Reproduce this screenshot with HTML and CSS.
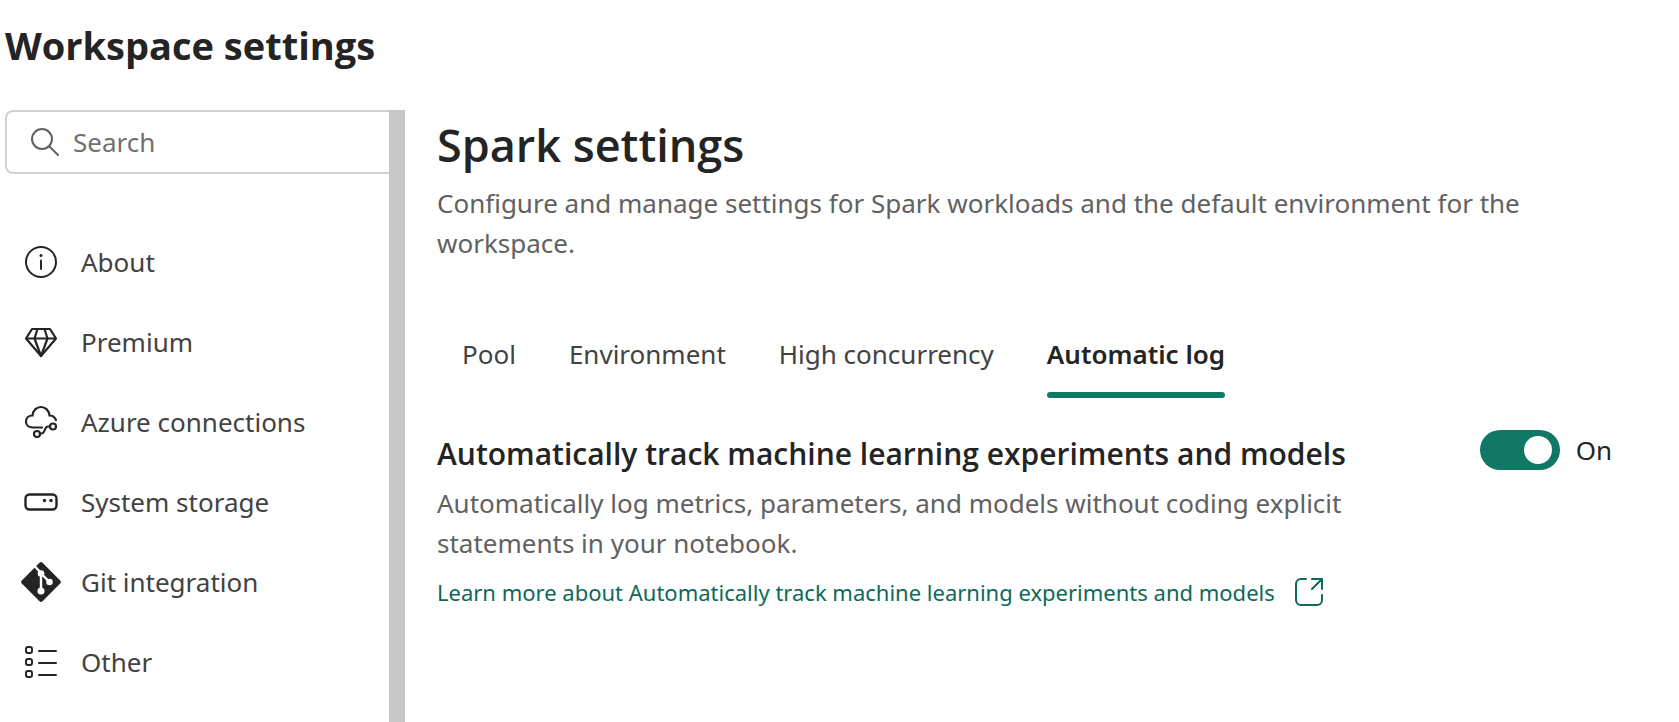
FILE: index.html
```html
<!DOCTYPE html>
<html lang="en">
<head>
<meta charset="utf-8">
<title>Workspace settings</title>
<meta name="viewport" content="width=device-width, initial-scale=1">
<link rel="stylesheet" href="styles.css">
</head>
<body>
<div class="page">
  <header class="page-header">
    <h1 class="page-title">Workspace settings</h1>
  </header>
  <div class="layout">
    <aside class="sidebar">
      <div class="sidebar-content">
        <label class="search">
          <svg class="search-icon" viewBox="0 0 28 28" fill="none" stroke="#616161" stroke-width="2" stroke-linecap="round" aria-hidden="true"><circle cx="11" cy="11" r="10"/><path d="M18.500 18.500 27 27"/></svg>
          <input class="search-input" type="search" placeholder="Search" aria-label="Search">
        </label>
        <nav class="nav" aria-label="Workspace settings">
          <a class="nav-item" href="#about">
            <svg class="nav-icon" viewBox="0 0 40 40" aria-hidden="true"><circle cx="20" cy="20" r="15" fill="none" stroke="#242424" stroke-width="2"/><circle cx="20" cy="13.500" r="1.500" fill="#242424"/><path d="M20 18.500v8.500" stroke="#242424" stroke-width="2" stroke-linecap="round"/></svg>
            About</a>
          <a class="nav-item" href="#premium">
            <svg class="nav-icon" viewBox="0 0 40 40" fill="none" stroke="#242424" stroke-width="2.200" stroke-linejoin="round" aria-hidden="true"><path d="M11 7h18l6 9.500L20 34 5 16.500z"/><path d="M5 16.500h30M16.500 7l-3 9.500L20 34l6.500-17.500-3-9.500"/></svg>
            Premium</a>
          <a class="nav-item" href="#azure">
            <svg class="nav-icon" viewBox="0 0 40 40" fill="none" stroke="#242424" stroke-width="2.200" stroke-linecap="round" aria-hidden="true"><path d="M21 25.500H11.500C7.500 25.500 5 23 5 19.500s2.500-6 6.500-6C12 8.500 15.500 5 20 5s8 3.500 8.500 8.500c3.500 0 5.500 2 6.500 4.500"/><circle cx="32" cy="24.500" r="3"/><circle cx="16" cy="32" r="3"/><path d="M19 31.500h1.500c4 0 2.500-7 6.500-7H29"/></svg>
            Azure connections</a>
          <a class="nav-item" href="#storage">
            <svg class="nav-icon" viewBox="0 0 40 40" aria-hidden="true"><rect x="4.500" y="12.500" width="31" height="15" rx="4" fill="none" stroke="#242424" stroke-width="2.400"/><circle cx="23.500" cy="18.500" r="1.700" fill="#242424"/><circle cx="30" cy="18.500" r="1.700" fill="#242424"/></svg>
            System storage</a>
          <a class="nav-item" href="#git">
            <svg class="nav-icon" viewBox="0 0 40 40" aria-hidden="true"><path d="M18.500.8a2.200 2.200 0 0 1 3 0L39.200 18.500a2.200 2.200 0 0 1 0 3L21.500 39.200a2.200 2.200 0 0 1-3 0L.8 21.500a2.200 2.200 0 0 1 0-3z" fill="#242424"/><path d="M14 4.500l6 6.500M20.500 12l8 8M20 12v16.500" stroke="#fff" stroke-width="2.400"/><g fill="#fff"><circle cx="20" cy="11.500" r="3.300"/><circle cx="28.500" cy="20" r="3.300"/><circle cx="20" cy="29" r="3.500"/></g></svg>
            Git integration</a>
          <a class="nav-item" href="#other">
            <svg class="nav-icon" viewBox="0 0 40 40" fill="none" stroke="#242424" stroke-width="2" stroke-linecap="round" aria-hidden="true"><rect x="5" y="5" width="6" height="6" rx="2"/><rect x="5" y="17" width="6" height="6" rx="2"/><rect x="5" y="29" width="6" height="6" rx="2"/><path d="M18 9h17M18 21h17M18 33h17"/></svg>
            Other</a>
        </nav>
      </div>
      <div class="sidebar-scrollbar"></div>
    </aside>
    <main class="main">
      <h2 class="main-title">Spark settings</h2>
      <p class="description">Configure and manage settings for Spark workloads and the default environment for the workspace.</p>
      <div class="tabs" role="tablist">
        <button class="tab" type="button" role="tab" aria-selected="false">Pool</button>
        <button class="tab" type="button" role="tab" aria-selected="false">Environment</button>
        <button class="tab" type="button" role="tab" aria-selected="false">High concurrency</button>
        <button class="tab tab-selected" type="button" role="tab" aria-selected="true">Automatic log</button>
      </div>
      <section class="setting">
        <div class="setting-text">
          <h3 class="setting-title">Automatically track machine learning experiments and models</h3>
          <p class="description">Automatically log metrics, parameters, and models without coding explicit statements in your notebook.</p>
          <a class="learn-more" href="#learn">Learn more about Automatically track machine learning experiments and models
            <svg class="link-icon" viewBox="0 0 28 28" fill="none" stroke="#0c695a" stroke-width="2" stroke-linecap="round" stroke-linejoin="round" aria-hidden="true"><path d="M11 1H6a5 5 0 0 0-5 5v16a5 5 0 0 0 5 5h16a5 5 0 0 0 5-5v-5M17 1h10v10M27 1 17 11"/></svg></a>
        </div>
        <label class="switch">
          <input class="switch-input" type="checkbox" role="switch" checked>
          On
        </label>
      </section>
    </main>
  </div>
</div>
</body>
</html>
```
FILE: styles.css
```css
* {
  box-sizing: border-box;
}

body {
  margin: 0;
  background: #fff;
  color: #242424;
  font-family: "Noto Sans", "Open Sans", sans-serif;
  font-size: 26px;
  line-height: 40px;
}

h1, h2, h3, p {
  margin: 0;
}

.page {
  display: flex;
  flex-direction: column;
  min-height: 100vh;
}

.page-header {
  padding: 17px 5px 37px;
}

.page-title {
  font-family: "Open Sans", sans-serif;
  font-size: 38px;
  line-height: 56px;
  font-weight: 700;
}

.layout {
  display: flex;
  flex: 1;
}

.sidebar {
  display: flex;
  flex: none;
  width: 405px;
}

.sidebar-content {
  flex: 1;
  min-width: 0;
  padding-left: 5px;
}

.sidebar-scrollbar {
  flex: none;
  width: 16px;
  background: #c7c7c7;
}

.search {
  display: flex;
  align-items: center;
  gap: 14px;
  height: 64px;
  padding-left: 24px;
  border: 2px solid #d1d1d1;
  border-right: 0;
  border-radius: 8px 0 0 8px;
}

.search-icon {
  flex: none;
  width: 28px;
  height: 28px;
}

.search-input {
  flex: 1;
  min-width: 0;
  padding: 0;
  border: 0;
  outline: 0;
  background: none;
  color: #242424;
  font: inherit;
}

.search-input::placeholder {
  color: #707070;
  opacity: 1;
}

.nav {
  display: flex;
  flex-direction: column;
  padding: 48px 0 0 16px;
}

.nav-item {
  display: flex;
  align-items: center;
  gap: 20px;
  height: 80px;
  color: #424242;
  text-decoration: none;
}

.nav-icon {
  flex: none;
  width: 40px;
  height: 40px;
}

.main {
  flex: 1;
  min-width: 0;
  padding: 3px 67px 32px 32px;
}

.main-title {
  font-family: "Open Sans", sans-serif;
  font-size: 45px;
  line-height: 64px;
  font-weight: 600;
  padding-bottom: 6px;
}

.description {
  color: #616161;
}

.tabs {
  display: flex;
  flex-wrap: wrap;
  align-items: flex-start;
  gap: 53px;
  padding: 61px 25px 0;
}

.tab {
  padding: 10px 0 0;
  border: 0;
  background: none;
  color: #424242;
  font: inherit;
}

.tab-selected {
  display: flex;
  flex-direction: column;
  gap: 18px;
  color: #242424;
  font-weight: 600;
}

.tab-selected::after {
  content: "";
  width: 100%;
  height: 6px;
  border-radius: 3px;
  background: #117865;
}

.setting {
  display: flex;
  align-items: flex-start;
  gap: 64px;
  padding-top: 32px;
}

.setting-text {
  flex: 1;
  min-width: 0;
}

.setting-title {
  font-family: "Open Sans", sans-serif;
  font-size: 30px;
  line-height: 48px;
  font-weight: 600;
  padding-bottom: 5px;
}

.learn-more {
  display: inline-flex;
  align-items: center;
  gap: 20px;
  padding-top: 9px;
  color: #0c695a;
  font-size: 22px;
  text-decoration: none;
}

.link-icon {
  flex: none;
  width: 28px;
  height: 28px;
}

.switch {
  display: flex;
  align-items: center;
  gap: 16px;
}

.switch-input {
  display: flex;
  align-items: center;
  justify-content: flex-end;
  width: 80px;
  height: 40px;
  margin: 0;
  padding: 0 8px;
  border-radius: 20px;
  background: #117865;
  appearance: none;
}

.switch-input::before {
  content: "";
  width: 28px;
  height: 28px;
  border-radius: 50%;
  background: #fff;
}

.switch-input:not(:checked) {
  justify-content: flex-start;
  background: #616161;
}
```
